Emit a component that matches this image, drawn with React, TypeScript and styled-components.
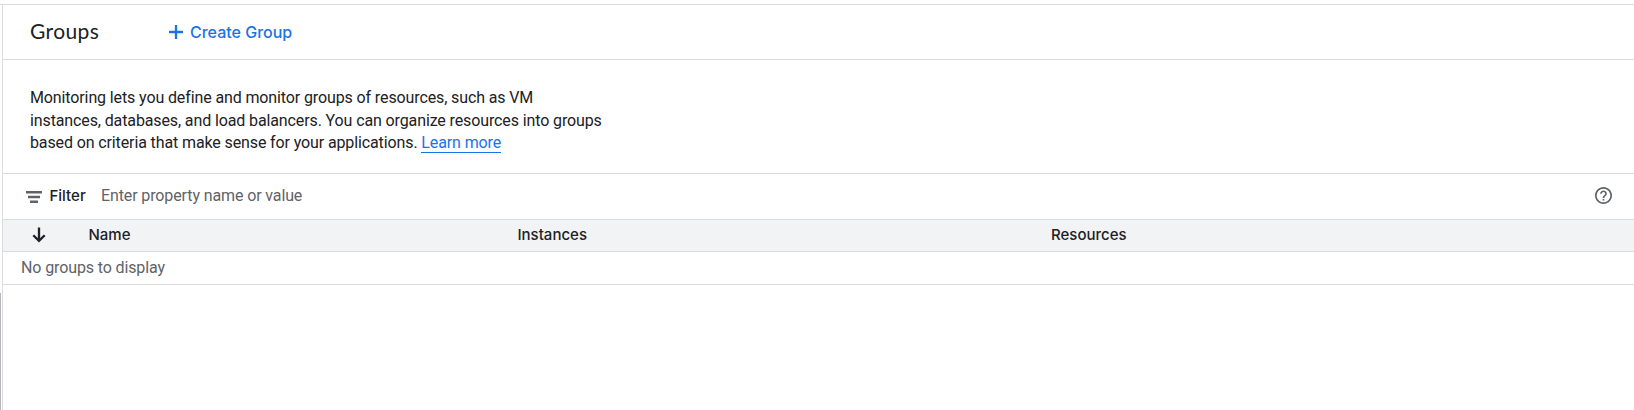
import React from 'react';
import styled, { createGlobalStyle } from 'styled-components';

const GlobalStyle = createGlobalStyle`
  *, *::before, *::after { box-sizing: border-box; }
  body { margin: 0; background: #fff; color: #202124; font: 16px/22.5px Roboto, sans-serif; letter-spacing: -0.118px; }
`;

const Page = styled.div`
  display: flex;
  flex-direction: column;
  height: 410px;
  padding-top: 4px;
  overflow: hidden;
`;

const Body = styled.div`
  display: flex;
  flex: 1;
  border-top: 1px solid #dadce0;
`;

const Rail = styled.div`
  width: 3px;
  flex: none;
  padding-top: 288px;
  border-right: 1px solid #dadce0;
`;

const RailHandle = styled.div`
  width: 1px;
  height: 100%;
  background: #b4b6b9;
`;

const Main = styled.main`
  flex: 1;
  min-width: 0;
`;

const Toolbar = styled.header`
  display: flex;
  align-items: center;
  height: 55px;
  padding: 0 0 1px 27px;
  border-bottom: 1px solid #dadce0;
`;

const Title = styled.h1`
  width: 138px;
  margin: 0;
  padding-bottom: 1px;
  font: 400 21px/28px Lato, sans-serif;
  letter-spacing: 0.4px;
`;

const CreateButton = styled.button`
  display: flex;
  align-items: center;
  gap: 6px;
  padding: 0;
  border: 0;
  background: none;
  color: #1a73e8;
  font: 500 16px/24px Inter, sans-serif;
`;

const Intro = styled.p`
  height: 114px;
  margin: 0;
  padding: 27px 27px 0;
  border-bottom: 1px solid #dadce0;
`;

const Link = styled.a`
  color: #1a73e8;
  text-decoration: none;
  border-bottom: 1px solid #1a73e8;
`;

const FilterBar = styled.div`
  display: flex;
  align-items: center;
  height: 45px;
  padding: 0 22px 0 23px;
  color: #5f6368;
`;

const FilterLabel = styled.span`
  width: 51.5px;
  margin-left: 7.5px;
  padding-bottom: 2px;
  color: #202124;
  font: 500 15px/22px Inter, sans-serif;
  letter-spacing: 0;
`;

const Placeholder = styled.span`
  flex: 1;
`;

const HeaderRow = styled.div`
  display: grid;
  grid-template-columns: 85.5px 429px 533.5px 1fr;
  align-items: center;
  height: 33px;
  padding-bottom: 2px;
  border: solid #dadce0;
  border-width: 1px 0;
  background: #f1f3f4;
  font: 500 15px/22px Inter, sans-serif;
  letter-spacing: 0;
`;

const SortCell = styled.span`
  display: flex;
  padding-left: 28px;
`;

const EmptyRow = styled.div`
  height: 33px;
  padding: 5px 0 0 18px;
  border-bottom: 1px solid #dadce0;
  color: #5f6368;
`;

const Icon = styled.svg`
  display: block;
  flex: none;
`;

const RaisedIcon = styled(Icon)`
  margin-bottom: 2px;
`;

export default function App() {
  return (
    <Page>
      <GlobalStyle />
      <Body>
        <Rail><RailHandle /></Rail>
        <Main>
          <Toolbar>
            <Title>Groups</Title>
            <CreateButton>
              <Icon width="16" height="16" viewBox="0 0 16 16">
                <path d="M8 1v14M1 8h14" stroke="currentColor" strokeWidth="2.3" />
              </Icon>
              <span>Create Group</span>
            </CreateButton>
          </Toolbar>
          <Intro>
            Monitoring lets you define and monitor groups of resources, such as VM<br />
            instances, databases, and load balancers. You can organize resources into groups<br />
            based on criteria that make sense for your applications. <Link>Learn more</Link>
          </Intro>
          <FilterBar>
            <Icon width="16" height="12" viewBox="0 0 16 12">
              <path d="M0 1.3h16M2 6h12M4 10.7h8" stroke="currentColor" strokeWidth="2.4" />
            </Icon>
            <FilterLabel>Filter</FilterLabel>
            <Placeholder>Enter property name or value</Placeholder>
            <RaisedIcon width="17" height="17" viewBox="2 2 20 20" fill="currentColor">
              <path d="M11 18h2v-2h-2v2zm1-16C6.48 2 2 6.48 2 12s4.48 10 10 10 10-4.48 10-10S17.52 2 12 2zm0 18c-4.41 0-8-3.59-8-8s3.59-8 8-8 8 3.59 8 8-3.59 8-8 8zm0-14c-2.21 0-4 1.79-4 4h2c0-1.1.9-2 2-2s2 .9 2 2c0 2-3 1.75-3 5h2c0-2.25 3-2.5 3-5 0-2.21-1.79-4-4-4z" />
            </RaisedIcon>
          </FilterBar>
          <HeaderRow>
            <SortCell>
              <Icon width="16" height="16" viewBox="0 0 16 16">
                <path d="M8 0.5v14M2.3 8.2l5.7 5.7 5.7-5.7" stroke="currentColor" strokeWidth="2.3" fill="none" />
              </Icon>
            </SortCell>
            <span>Name</span>
            <span>Instances</span>
            <span>Resources</span>
          </HeaderRow>
          <EmptyRow>No groups to display</EmptyRow>
        </Main>
      </Body>
    </Page>
  );
}
